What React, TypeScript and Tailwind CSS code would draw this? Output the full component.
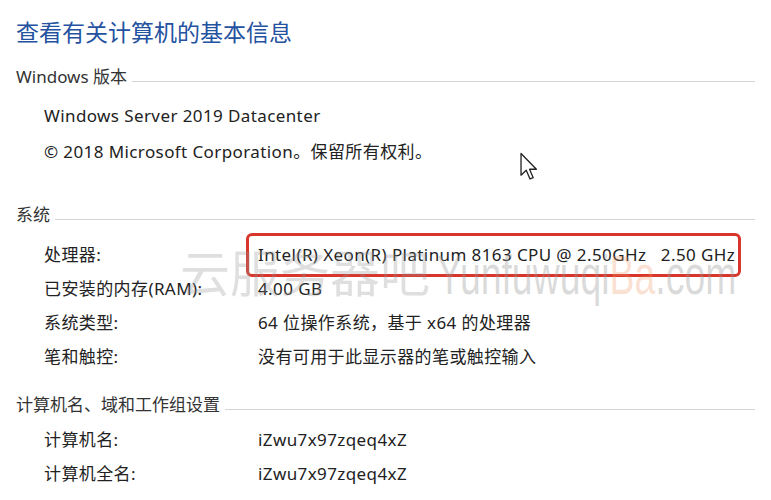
import React from 'react';

const FONT = { fontFamily: '"Noto Sans", "Noto Sans CJK SC", sans-serif' };

function SectionHeader({ title }: { title: string }) {
  return (
    <div className="flex items-center h-[34px] text-[17px] text-[#333]">
      <span className="whitespace-nowrap">{title}</span>
      <div className="flex-1 h-px bg-[#d4d4d4] ml-[5px] mt-[8px]" />
    </div>
  );
}

function Row({ label, value }: { label: string; value: React.ReactNode }) {
  return (
    <div className="flex items-center h-[34px] pl-[28px] text-[17px] tracking-[0.4px] text-[#222]">
      <span className="w-[214px] shrink-0 whitespace-nowrap">{label}</span>
      <span className="whitespace-nowrap">{value}</span>
    </div>
  );
}

export default function App() {
  return (
    <div className="relative w-[771px] h-[500px] overflow-hidden bg-white" style={FONT}>
      <div className="px-4">
        <h1 className="mt-[18px] h-[28px] leading-[28px] text-[23px] text-[#2452a0]">
          查看有关计算机的基本信息
        </h1>

        {/* Windows 版本 */}
        <div className="mt-[14px]">
          <SectionHeader title="Windows 版本" />
        </div>
        <div className="mt-[4px] pl-[28px] text-[17px] tracking-[0.4px] text-[#222]">
          <div className="h-[36px] flex items-center">Windows Server 2019 Datacenter</div>
          <div className="h-[36px] flex items-center">© 2018 Microsoft Corporation。保留所有权利。</div>
        </div>

        {/* 系统 */}
        <div className="mt-[28px]">
          <SectionHeader title="系统" />
        </div>
        <div className="mt-[6px]">
          <Row
            label="处理器:"
            value={
              <span className="relative">
                Intel(R) Xeon(R) Platinum 8163 CPU @ 2.50GHz&nbsp;&nbsp;&nbsp;2.50 GHz
                <span className="absolute -left-[12px] -right-[6px] -top-[10px] -bottom-[11px] border-[3px] border-[#d9362b] rounded-[6px]" />
              </span>
            }
          />
          <Row label="已安装的内存(RAM):" value="4.00 GB" />
          <Row label="系统类型:" value="64 位操作系统，基于 x64 的处理器" />
          <Row label="笔和触控:" value="没有可用于此显示器的笔或触控输入" />
        </div>

        {/* 计算机名 */}
        <div className="mt-[14px]">
          <SectionHeader title="计算机名、域和工作组设置" />
        </div>
        <div className="mt-[1px]">
          <Row label="计算机名:" value="iZwu7x97zqeq4xZ" />
          <Row label="计算机全名:" value="iZwu7x97zqeq4xZ" />
        </div>
      </div>

      {/* watermark */}
      <div
        className="absolute left-[180px] top-[248px] h-[54px] flex items-center text-[50px] leading-[54px] whitespace-nowrap pointer-events-none"
        style={{ fontFamily: '"Liberation Sans", "Noto Sans CJK SC", sans-serif' }}
      >
        <span className="text-[rgba(150,150,150,0.3)]">云服务器吧</span>
        <span className="inline-block ml-[7px] origin-left scale-x-[0.68] text-[55px] text-[rgba(150,150,150,0.34)]">
          Yunfuwuqi<span className="text-[rgba(235,150,100,0.3)]">Ba</span>.com
        </span>
      </div>

      {/* mouse cursor */}
      <svg
        className="absolute left-[519px] top-[152px]"
        width="20"
        height="29"
        viewBox="0 0 13 20"
      >
        <path
          d="M1 1 L1 16 L4.6 12.6 L7.2 18.6 L9.4 17.7 L6.9 11.9 L11.6 11.9 Z"
          fill="#fff"
          stroke="#222"
          strokeWidth="0.9"
          strokeLinejoin="round"
        />
      </svg>
    </div>
  );
}
